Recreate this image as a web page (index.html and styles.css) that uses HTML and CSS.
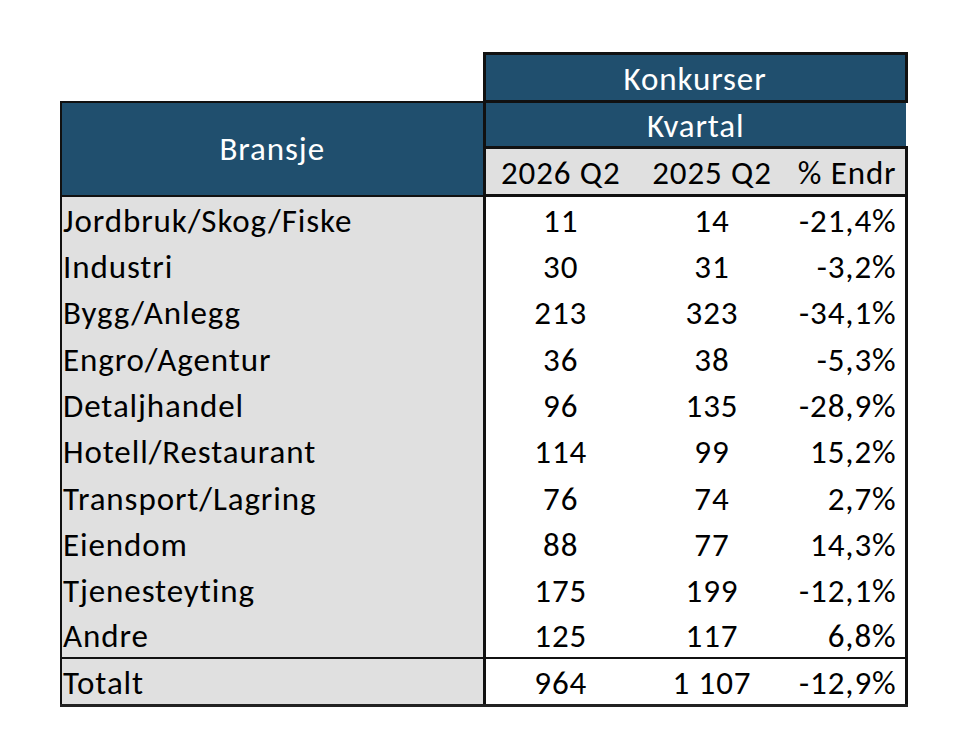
FILE: index.html
```html
<!DOCTYPE html>
<html lang="no">
<head>
<meta charset="utf-8">
<title>Konkurser</title>
<link rel="stylesheet" href="styles.css">
</head>
<body>
<div class="wrap">
<table class="tbl">
  <colgroup>
    <col class="c-name">
    <col class="c-a">
    <col class="c-b">
    <col class="c-c">
  </colgroup>
  <tr class="r-top">
    <td class="blank"></td>
    <td class="hd hd-top" colspan="3">Konkurser</td>
  </tr>
  <tr class="r-mid">
    <td class="hd hd-name" rowspan="2">Bransje</td>
    <td class="hd hd-kv" colspan="3">Kvartal</td>
  </tr>
  <tr class="r-sub">
    <td class="sub">2026 Q2</td>
    <td class="sub">2025 Q2</td>
    <td class="sub sub-r">% Endr</td>
  </tr>
  <tr class="row first"><td class="name">Jordbruk/Skog/Fiske</td><td class="num">11</td><td class="num">14</td><td class="pct">-21,4%</td></tr>
  <tr class="row"><td class="name">Industri</td><td class="num">30</td><td class="num">31</td><td class="pct">-3,2%</td></tr>
  <tr class="row"><td class="name">Bygg/Anlegg</td><td class="num">213</td><td class="num">323</td><td class="pct">-34,1%</td></tr>
  <tr class="row"><td class="name">Engro/Agentur</td><td class="num">36</td><td class="num">38</td><td class="pct">-5,3%</td></tr>
  <tr class="row"><td class="name">Detaljhandel</td><td class="num">96</td><td class="num">135</td><td class="pct">-28,9%</td></tr>
  <tr class="row"><td class="name">Hotell/Restaurant</td><td class="num">114</td><td class="num">99</td><td class="pct">15,2%</td></tr>
  <tr class="row"><td class="name">Transport/Lagring</td><td class="num">76</td><td class="num">74</td><td class="pct">2,7%</td></tr>
  <tr class="row"><td class="name">Eiendom</td><td class="num">88</td><td class="num">77</td><td class="pct">14,3%</td></tr>
  <tr class="row"><td class="name">Tjenesteyting</td><td class="num">175</td><td class="num">199</td><td class="pct">-12,1%</td></tr>
  <tr class="row"><td class="name">Andre</td><td class="num">125</td><td class="num">117</td><td class="pct">6,8%</td></tr>
  <tr class="row total"><td class="name">Totalt</td><td class="num">964</td><td class="num">1 107</td><td class="pct">-12,9%</td></tr>
</table>
</div>
</body>
</html>
```

FILE: styles.css
```css
html, body {
  margin: 0;
  padding: 0;
  background: #ffffff;
}

.wrap {
  padding: 52px 0 0 60px;
}

.tbl {
  border-collapse: collapse;
  table-layout: fixed;
  width: 845px;
  font-family: Carlito, "Open Sans", "Noto Sans", sans-serif;
  font-size: 33px;
  letter-spacing: 0.9px;
  color: #000000;
}

.c-name { width: 423px; }
.c-a { width: 152px; }
.c-b { width: 152px; }
.c-c { width: 118px; }

.tbl td {
  padding: 0;
  white-space: nowrap;
  line-height: 1;
}

.blank {
  background: #ffffff;
  border: none;
}

.hd {
  background: #204f6e;
  color: #ffffff;
  text-align: center;
}

.r-top { height: 48px; }
.r-mid { height: 46px; }
.r-sub { height: 48px; }

.hd-top {
  border: 3px solid #111111;
  vertical-align: middle;
  padding-top: 4px !important;
}

.hd-kv {
  border-left: 3px solid #111111;
  border-right: none;
  vertical-align: middle;
  padding-top: 4px !important;
}

.hd-name {
  border: 2px solid #111111;
  border-right: 3px solid #111111;
  vertical-align: middle;
  padding-top: 2px !important;
}

.sub {
  background: #e0e0e0;
  text-align: center;
  border-top: 3px solid #111111;
  border-bottom: 3px solid #111111;
  vertical-align: bottom;
  padding-bottom: 4px !important;
}

.sub-r {
  text-align: right;
  padding-right: 8px !important;
  border-right: 3px solid #111111;
}

.row { height: 46.3px; }
.row.total { height: 47px; }

.name {
  background: #e0e0e0;
  border-left: 2px solid #111111;
  border-right: 3px solid #111111;
  text-align: left;
  vertical-align: bottom;
  padding-left: 1px !important;
  padding-bottom: 4px !important;
}

.num {
  text-align: center;
  vertical-align: bottom;
  padding-bottom: 4px !important;
}

.pct {
  text-align: right;
  vertical-align: bottom;
  padding-right: 8px !important;
  padding-bottom: 4px !important;
  border-right: 3px solid #111111;
}

.total td {
  border-top: 2px solid #111111;
  border-bottom: 3px solid #222222;
}
```
